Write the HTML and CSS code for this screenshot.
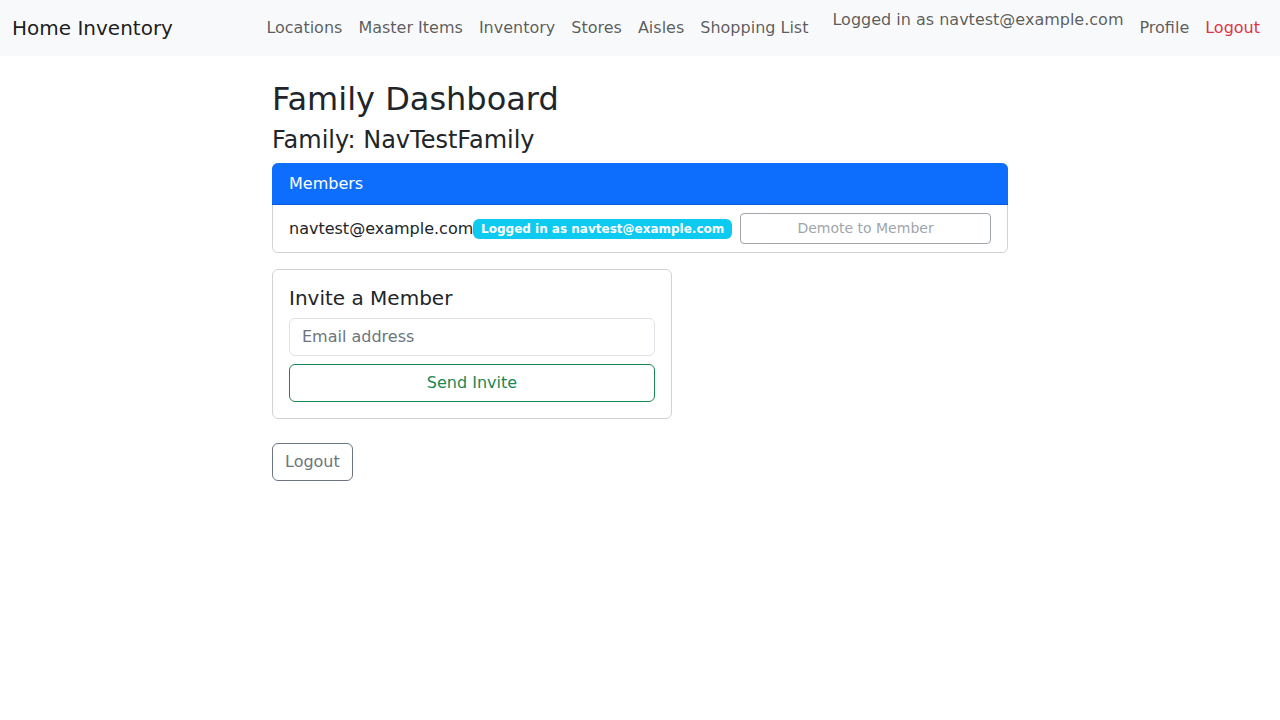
FILE: index.html
```html
<!DOCTYPE html>
<html lang="en">
<head>
<meta charset="utf-8">
<title>Family Dashboard</title>
<link rel="stylesheet" href="styles.css">
</head>
<body>
<nav class="navbar">
  <a class="brand" href="#">Home Inventory</a>
  <ul class="nav-main">
    <li><a class="nav-link" href="#">Locations</a></li>
    <li><a class="nav-link" href="#">Master Items</a></li>
    <li><a class="nav-link" href="#">Inventory</a></li>
    <li><a class="nav-link" href="#">Stores</a></li>
    <li><a class="nav-link" href="#">Aisles</a></li>
    <li><a class="nav-link" href="#">Shopping List</a></li>
  </ul>
  <span class="navbar-text">Logged in as navtest@example.com</span>
  <ul class="nav-user">
    <li><a class="nav-link" href="#">Profile</a></li>
    <li><a class="nav-link danger" href="#">Logout</a></li>
  </ul>
</nav>
<main class="page">
  <h2 class="title">Family Dashboard</h2>
  <h4 class="subtitle">Family: NavTestFamily</h4>
  <section class="card">
    <div class="card-header">Members</div>
    <ul class="member-list">
      <li class="member-item">
        <span class="member-email">navtest@example.com</span>
        <span class="badge">Logged in as navtest@example.com</span>
        <button class="btn btn-sm btn-outline-secondary demote" disabled>Demote to Member</button>
      </li>
    </ul>
  </section>
  <section class="card invite-card">
    <div class="card-body">
      <h5 class="card-title">Invite a Member</h5>
      <input class="form-control" type="email" placeholder="Email address">
      <button class="btn btn-outline-success full">Send Invite</button>
    </div>
  </section>
  <button class="btn btn-outline-secondary logout">Logout</button>
</main>
</body>
</html>
```

FILE: styles.css
```css
* { box-sizing: border-box; }
html, body { margin: 0; padding: 0; }
body {
  font-family: "DejaVu Sans", sans-serif;
  font-size: 16px;
  line-height: 1.5;
  color: #212529;
  background: #fff;
}
a { text-decoration: none; }
ul { list-style: none; margin: 0; padding: 0; }

.navbar {
  display: flex;
  align-items: center;
  background: #f8f9fa;
  padding: 8px 12px;
  height: 56px;
}
.brand {
  font-size: 20px;
  line-height: 30px;
  color: rgba(0,0,0,.9);
  margin-right: 16px;
}
.nav-main, .nav-user { display: flex; }
.nav-main { margin-left: auto; }
.nav-link {
  display: block;
  padding: 8px;
  line-height: 24px;
  color: rgba(0,0,0,.65);
}
.nav-link.danger { color: #dc3545; }
.navbar-text {
  align-self: flex-start;
  margin-left: 16px;
  margin-right: 8px;
  line-height: 24px;
  color: rgba(0,0,0,.65);
}

.page {
  width: 736px;
  margin: 24px auto 0;
}
.title {
  font-size: 32px;
  font-weight: 500;
  line-height: 1.2;
  margin: 0 0 8px;
}
.subtitle {
  font-size: 24px;
  font-weight: 500;
  line-height: 1.2;
  margin: 0 0 8px;
}
.card {
  border: 1px solid rgba(0,0,0,.175);
  border-radius: 6px;
}
.card-header {
  background: #0d6efd;
  color: #fff;
  margin: -1px -1px 0;
  padding: 9px 17px 8px;
  border-radius: 6px 6px 0 0;
  border-bottom: 1px solid rgba(0,0,0,.175);
}
.member-item {
  display: flex;
  align-items: center;
  padding: 8px 16px;
}
.badge {
  display: inline-block;
  background: #0dcaf0;
  color: #fff;
  font-size: 12px;
  font-weight: 700;
  line-height: 1;
  padding: 4.2px 7.8px;
  border-radius: 6px;
}
.btn {
  font-family: inherit;
  display: inline-block;
  background: transparent;
  font-size: 16px;
  line-height: 24px;
  padding: 6px 12px;
  border: 1px solid transparent;
  border-radius: 6px;
  text-align: center;
}
.btn-sm {
  font-size: 14px;
  line-height: 21px;
  padding: 4px 8px;
  border-radius: 4px;
}
.btn-outline-secondary { color: #6c757d; border-color: #6c757d; }
.btn-outline-success { color: #198754; border-color: #198754; }
.btn:disabled { opacity: .65; }
.demote { flex: 1; margin-left: 8px; }

.invite-card { width: 400px; margin-top: 16px; }
.card-body { padding: 16px; }
.card-title {
  font-size: 20px;
  font-weight: 500;
  line-height: 1.2;
  margin: 0 0 8px;
}
.form-control {
  display: block;
  width: 100%;
  font-family: inherit;
  font-size: 16px;
  line-height: 24px;
  padding: 6px 12px;
  border: 1px solid #dee2e6;
  border-radius: 6px;
  color: #212529;
  margin-bottom: 8px;
}
.form-control::placeholder { color: #6c757d; opacity: 1; }
.full { display: block; width: 100%; }
.logout { margin-top: 24px; }
```
